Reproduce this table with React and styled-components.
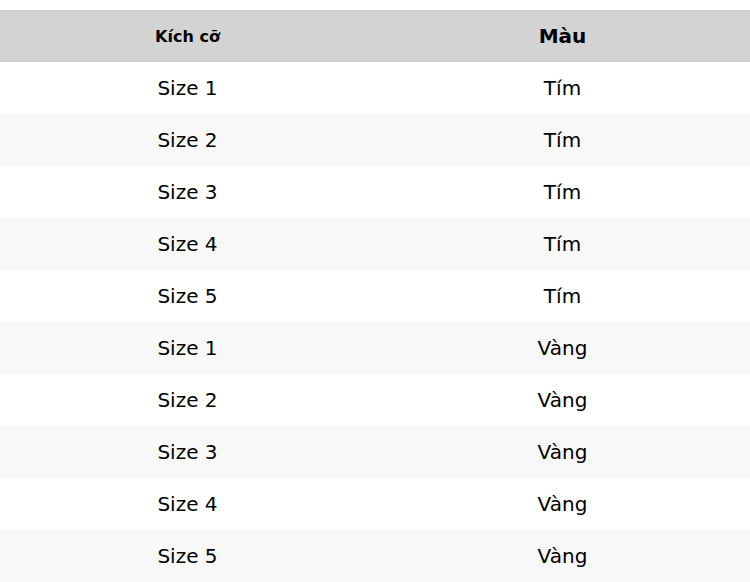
import React from "react";
import styled, { createGlobalStyle } from "styled-components";

const Global = createGlobalStyle`
  html, body { margin: 0; padding: 0; background: #fff; }
  body { font-family: "DejaVu Sans", sans-serif; color: #000; }
`;

const Table = styled.table`
  width: 750px;
  margin-top: 10px;
  border-collapse: collapse;
  table-layout: fixed;
`;

const HeadCell = styled.th`
  background: #d3d3d3;
  height: 52px;
  padding: 0;
  font-weight: bold;
  font-size: ${(p) => p.$size}px;
  text-align: center;
  vertical-align: middle;
`;

const Row = styled.tr`
  background: ${(p) => (p.$alt ? "#f8f8f8" : "#fff")};
`;

const Cell = styled.td`
  height: 52px;
  padding: 0;
  font-size: 20px;
  text-align: center;
  vertical-align: middle;
`;

const rows = [
  ["Size 1", "Tím"],
  ["Size 2", "Tím"],
  ["Size 3", "Tím"],
  ["Size 4", "Tím"],
  ["Size 5", "Tím"],
  ["Size 1", "Vàng"],
  ["Size 2", "Vàng"],
  ["Size 3", "Vàng"],
  ["Size 4", "Vàng"],
  ["Size 5", "Vàng"],
];

export default function App() {
  return (
    <>
      <Global />
      <Table>
        <thead>
          <tr>
            <HeadCell $size={16}>Kích cỡ</HeadCell>
            <HeadCell $size={20}>Màu</HeadCell>
          </tr>
        </thead>
        <tbody>
          {rows.map(([s, c], i) => (
            <Row key={i} $alt={i % 2 === 1}>
              <Cell>{s}</Cell>
              <Cell>{c}</Cell>
            </Row>
          ))}
        </tbody>
      </Table>
    </>
  );
}
